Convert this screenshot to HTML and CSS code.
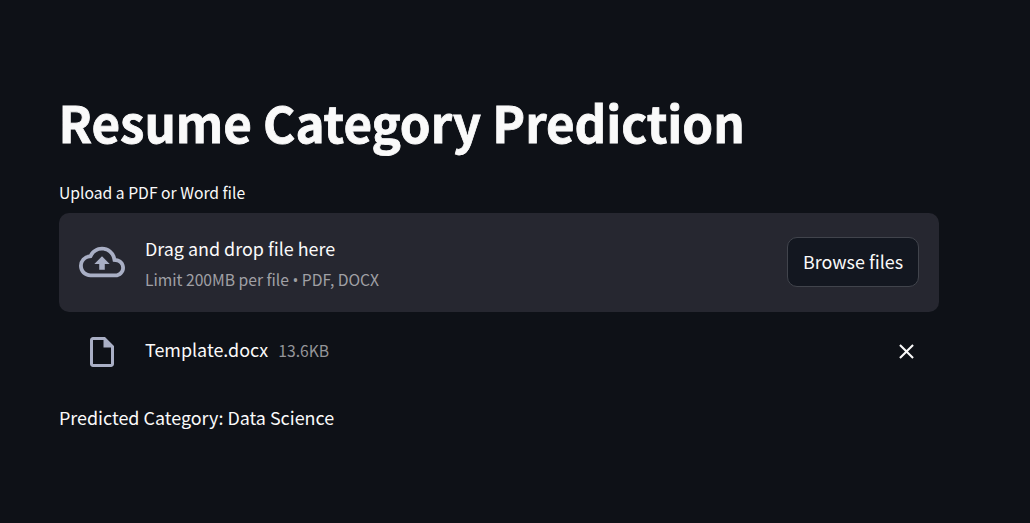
FILE: index.html
```html
<!DOCTYPE html>
<html lang="en">
<head>
<meta charset="utf-8">
<title>Resume Category Prediction</title>
<link rel="stylesheet" href="styles.css">
</head>
<body>
<main class="page">
  <h1 class="title">Resume Category Prediction</h1>
  <p class="label">Upload a PDF or Word file</p>
  <section class="dropzone">
    <svg class="cloud" viewBox="0 0 24 24"><path d="M19.35 10.04A7.49 7.49 0 0012 4C9.11 4 6.6 5.64 5.35 8.04A5.994 5.994 0 000 14c0 3.31 2.69 6 6 6h13c2.76 0 5-2.24 5-5 0-2.64-2.05-4.78-4.65-4.96zM19 18H6c-2.21 0-4-1.79-4-4 0-2.05 1.53-3.76 3.56-3.97l1.07-.11.5-.95A5.469 5.469 0 0112 6c2.62 0 4.88 1.86 5.39 4.43l.3 1.5 1.53.11A2.98 2.98 0 0122 15c0 1.65-1.35 3-3 3zM8 13h2.55v3h2.9v-3H16l-4-4-4 4z"/></svg>
    <div class="instructions">
      <span class="prompt">Drag and drop file here</span>
      <span class="limit">Limit 200MB per file <span class="bullet">•</span> PDF, DOCX</span>
    </div>
    <button class="browse" type="button">Browse files</button>
  </section>
  <div class="file">
    <svg class="doc" viewBox="0 0 24 24"><path d="M14 2H6c-1.1 0-1.99.9-1.99 2L4 20c0 1.1.89 2 1.99 2H18c1.1 0 2-.9 2-2V8l-6-6zM6 20V4h7v5h5v11H6z"/></svg>
    <span class="name">Template.docx</span>
    <span class="size">13.6KB</span>
    <svg class="remove" viewBox="0 0 24 24"><path d="M19 6.41L17.59 5 12 10.59 6.41 5 5 6.41 10.59 12 5 17.59 6.41 19 12 13.41 17.59 19 19 17.59 13.41 12z"/></svg>
  </div>
  <p class="result">Predicted Category: Data Science</p>
</main>
</body>
</html>
```

FILE: styles.css
```css
* { box-sizing: border-box; }
body {
  margin: 0;
  background: #0e1117;
  color: #fafafa;
  font-family: "Noto Sans CJK SC", sans-serif;
  font-size: 17.92px;
}
.page { width: 939px; padding: 89px 0 0 59px; }
.title {
  margin: 0 0 0 -0.5px;
  font-size: 49.3px;
  font-weight: 700;
  line-height: 65px;
  letter-spacing: -0.03px;
  white-space: nowrap;
  -webkit-text-stroke: 0.8px #fafafa;
}
.label { margin: 29px 0 10px; font-size: 15.7px; line-height: 20px; }
.dropzone {
  display: flex;
  align-items: center;
  height: 99px;
  padding: 0 20px 2px;
  border-radius: 10px;
  background: #262730;
}
.cloud { width: 46px; height: 46px; margin-right: 20px; fill: #a9afc5; }
.instructions { display: flex; flex-direction: column; flex: 1; padding-top: 6px; }
.prompt { line-height: 30px; }
.limit { font-size: 15.7px; line-height: 34px; letter-spacing: -0.02px; color: #a0a0a5; }
.bullet { font-family: "Open Sans", sans-serif; line-height: 1; }
.browse {
  width: 132px;
  height: 50px;
  padding: 0 0 1px;
  border: 1px solid #41444c;
  border-radius: 10px;
  background: #131720;
  color: #fafafa;
  font: inherit;
}
.file { display: flex; align-items: center; height: 40px; margin-top: 20px; padding: 0 20px 0 25px; }
.doc { width: 36px; height: 36px; margin-right: 25px; fill: #a9afc5; }
.name { padding-bottom: 7px; }
.size { margin-left: 10px; padding-bottom: 4px; font-size: 15.7px; color: #949599; }
.remove { width: 25px; height: 25px; margin: 0 0 1px auto; fill: #fafafa; }
.result { margin: 30px 0 0; line-height: 30px; }
```
